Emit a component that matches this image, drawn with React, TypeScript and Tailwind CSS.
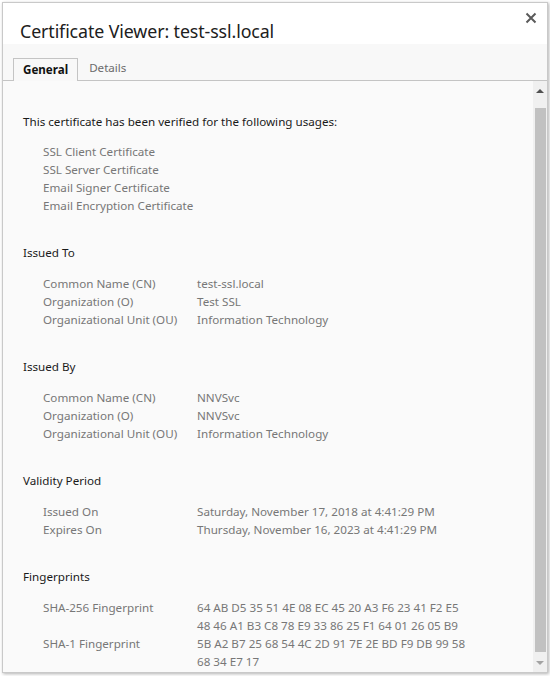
const usages = [
  'SSL Client Certificate',
  'SSL Server Certificate',
  'Email Signer Certificate',
  'Email Encryption Certificate',
];

type Row = { label: string; value: string[] };

const sections: { title: string; rows: Row[] }[] = [
  {
    title: 'Issued To',
    rows: [
      { label: 'Common Name (CN)', value: ['test-ssl.local'] },
      { label: 'Organization (O)', value: ['Test SSL'] },
      { label: 'Organizational Unit (OU)', value: ['Information Technology'] },
    ],
  },
  {
    title: 'Issued By',
    rows: [
      { label: 'Common Name (CN)', value: ['NNVSvc'] },
      { label: 'Organization (O)', value: ['NNVSvc'] },
      { label: 'Organizational Unit (OU)', value: ['Information Technology'] },
    ],
  },
  {
    title: 'Validity Period',
    rows: [
      { label: 'Issued On', value: ['Saturday, November 17, 2018 at 4:41:29 PM'] },
      { label: 'Expires On', value: ['Thursday, November 16, 2023 at 4:41:29 PM'] },
    ],
  },
  {
    title: 'Fingerprints',
    rows: [
      {
        label: 'SHA-256 Fingerprint',
        value: [
          '64 AB D5 35 51 4E 08 EC 45 20 A3 F6 23 41 F2 E5',
          '48 46 A1 B3 C8 78 E9 33 86 25 F1 64 01 26 05 B9',
        ],
      },
      {
        label: 'SHA-1 Fingerprint',
        value: [
          '5B A2 B7 25 68 54 4C 2D 91 7E 2E BD F9 DB 99 58',
          '68 34 E7 17',
        ],
      },
    ],
  },
];

function Scrollbar() {
  return (
    <div className="w-[14px] shrink-0 bg-[#f0f0f0] flex flex-col items-center">
      <div className="h-[20px] flex items-center justify-center">
        <div className="w-0 h-0 border-l-[4px] border-r-[4px] border-b-[4px] border-l-transparent border-r-transparent border-b-[#505050]" />
      </div>
      <div className="w-[11px] flex-1 bg-[#c1c1c1] mt-[7px] mb-[2px]" />
      <div className="h-[18px] flex items-center justify-center">
        <div className="w-0 h-0 border-l-[4px] border-r-[4px] border-t-[4px] border-l-transparent border-r-transparent border-t-[#a3a3a3]" />
      </div>
    </div>
  );
}

export default function App() {
  return (
    <div className="w-[550px] h-[676px] bg-white pt-[2px] pl-[2px] font-['Noto_Sans',sans-serif]">
      <div className="w-[546px] h-[671px] border border-[#c9c9c9] shadow-[1px_1px_3px_rgba(0,0,0,0.3)] flex flex-col overflow-hidden bg-white">
        {/* Header */}
        <div className="h-[41px] shrink-0 bg-white flex items-start justify-between pl-[17px] pr-[10px]">
          <h1 className="text-[17.8px] leading-[24px] mt-[16px] text-[#202020] tracking-[-0.1px]">
            Certificate Viewer: test-ssl.local
          </h1>
          <button className="mt-[9px] text-[#5a5a5a]">
            <svg width="12" height="12" viewBox="0 0 12 12">
              <path d="M1.5 1.5 L10.5 10.5 M10.5 1.5 L1.5 10.5" stroke="currentColor" strokeWidth="2" />
            </svg>
          </button>
        </div>

        {/* Tabs */}
        <div className="h-[37px] shrink-0 bg-[#f8f8f8] flex items-end pl-[10px] border-b border-[#c4c4c4]">
          <div className="h-[23px] px-[9px] border border-b-0 border-[#c4c4c4] bg-[#f8f8f8] -mb-px text-[11.6px] font-bold leading-[22px] text-[#111]">
            General
          </div>
          <div className="h-[23px] px-[11px] text-[11.6px] leading-[22px] text-[#6b6b6b]">Details</div>
        </div>

        {/* Body */}
        <div className="flex-1 flex min-h-0 bg-[#fafafa]">
          <div className="flex-1 overflow-hidden pl-[20px] pt-[32px] text-[11.65px] leading-[18px]">
            <p className="text-[#1a1a1a]">This certificate has been verified for the following usages:</p>
            <div className="mt-[12px] pl-[20px] text-[#777]">
              {usages.map((u) => (
                <div key={u}>{u}</div>
              ))}
            </div>
            {sections.map((s) => (
              <div key={s.title} className="mt-[29px]">
                <div className="text-[#1a1a1a]">{s.title}</div>
                <div className="mt-[13px] pl-[20px] text-[#777]">
                  {s.rows.map((r) => (
                    <div key={r.label} className="flex">
                      <div className="w-[154px] shrink-0">{r.label}</div>
                      <div>
                        {r.value.map((v) => (
                          <div key={v}>{v}</div>
                        ))}
                      </div>
                    </div>
                  ))}
                </div>
              </div>
            ))}
          </div>
          <Scrollbar />
        </div>
      </div>
    </div>
  );
}
